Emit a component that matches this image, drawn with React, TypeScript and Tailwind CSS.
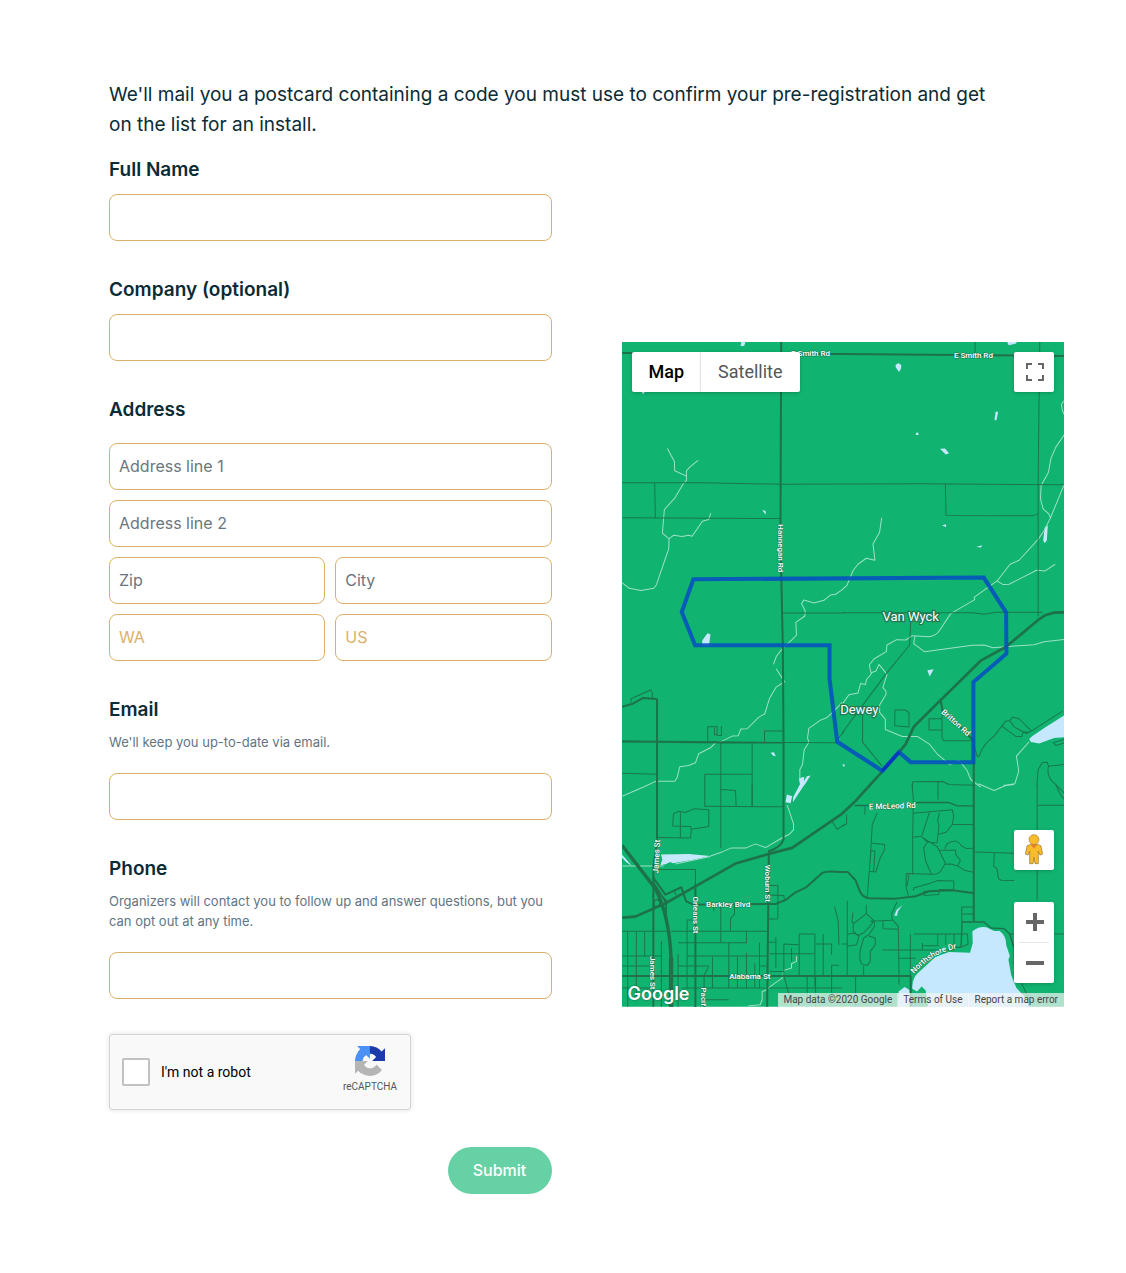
import React from "react";

const inputClass =
  "h-[47px] w-full min-w-0 rounded-lg border border-[#dbb06a] bg-white px-[9px] pb-[2px] text-base text-[#0b2b35] placeholder:text-[#6c757d] placeholder:opacity-100 focus:outline-none focus:ring-2 focus:ring-[#dbb06a]/40";
const labelClass = "block text-[19px] leading-[30px] font-semibold";

function Field({ id, label, type = "text", hint }: { id: string; label: string; type?: string; hint?: string }) {
  return (
    <div className="mb-[34px]">
      <label htmlFor={id} className={labelClass}>
        {label}
      </label>
      {hint && (
        <p id={id + "-hint"} className="mt-[7px] mb-[21px] text-[13px] leading-5 text-[#5f7583]">
          {hint}
        </p>
      )}
      <input
        id={id}
        type={type}
        aria-describedby={hint ? id + "-hint" : undefined}
        className={inputClass + (hint ? "" : " mt-[9px]")}
      />
    </div>
  );
}

function Recaptcha() {
  return (
    <div className="mt-[35px] flex h-[76px] w-[302px] items-center rounded-[3px] border border-[#d3d3d3] bg-[#f9f9f9] pl-3 shadow-[0_0_4px_1px_rgba(0,0,0,0.08)] font-[Roboto,sans-serif]">
      <input
        id="robot"
        type="checkbox"
        className="size-7 shrink-0 appearance-none rounded-[2px] border-2 border-[#c1c1c1] bg-white checked:bg-[#4285f4]"
      />
      <label htmlFor="robot" className="ml-[11px] flex-1 text-sm text-black">
        I'm not a robot
      </label>
      <div className="mr-[13px] flex flex-col items-center self-start pt-[11px]">
        <svg viewBox="0 0 64 64" className="size-[30px]" aria-hidden="true">
          <path fill="#1c3aa9" d="M64 31.955l-.033-1.37V4.687l-7.16 7.16C50.948 4.674 42.033.093 32.05.093c-10.4 0-19.622 4.96-25.458 12.64l11.736 11.86a15.55 15.55 0 0 1 4.754-5.334c2.05-1.6 4.952-2.906 8.968-2.906.485 0 .86.057 1.135.163 4.976.393 9.288 3.14 11.828 7.124l-8.307 8.307L64 31.953" />
          <path fill="#4a90f5" d="M31.862.094l-1.37.033H4.594l7.16 7.16C4.58 13.147 0 22.06 0 32.046c0 10.4 4.96 19.622 12.64 25.458L24.5 45.768a15.55 15.55 0 0 1-5.334-4.754c-1.6-2.05-2.906-4.952-2.906-8.968 0-.485.057-.86.163-1.135.393-4.976 3.14-9.288 7.124-11.828l8.307 8.307L31.86.095" />
          <path fill="#b5b5b5" d="M.001 32.045l.033 1.37v25.898l7.16-7.16c5.86 7.173 14.774 11.754 24.76 11.754 10.4 0 19.622-4.96 25.458-12.64l-11.736-11.86a15.55 15.55 0 0 1-4.754 5.334c-2.05 1.6-4.952 2.906-8.968 2.906-.485 0-.86-.057-1.135-.163-4.976-.393-9.288-3.14-11.828-7.124l8.307-8.307c-10.522.04-22.4.066-27.295-.005" />
        </svg>
        <span className="mt-[5px] text-[10px] leading-[12px] text-[#555]">reCAPTCHA</span>
      </div>
    </div>
  );
}

function RoadLabel({ x, y, children, rotate = 0, size = 24 }: { x: number; y: number; children: string; rotate?: number; size?: number }) {
  return (
    <text
      transform={`translate(${x} ${y}) rotate(${rotate})`}
      textAnchor="middle"
      dominantBaseline="central"
      fontSize={size}
      fontWeight={size > 30 ? 400 : 500}
      fill="#fff"
      stroke="#1f7a55"
      strokeWidth={size > 30 ? 8 : 3}
      paintOrder="stroke"
      strokeLinejoin="round"
    >
      {children}
    </text>
  );
}

function MapDrawing() {
  return (
    <svg
      viewBox="0 0 1326 1992"
      preserveAspectRatio="xMidYMid slice"
      className="block size-full font-[Roboto,sans-serif]"
      role="img"
      aria-label="Map of Van Wyck and Dewey"
    >
      <rect width="1326" height="1992" fill="#10b36f" />

      {/* lakes and ponds */}
      <g fill="#c5e8ff">
        <path d="M358 0H370L366 12L355 12ZM420 504L430 506L431 518ZM60 150h7v4h-7z" />
        <g transform="translate(660 0)">
          <path d="M494 0L524 0L519 5L499 10ZM160 68L169 63L177 70L176 80L170 90L160 76ZM460 208L467 210L462 235L456 233ZM222 272L227 271L229 279L220 279ZM293 320L308 319L320 333L310 337ZM299 550L311 546V554ZM401 614L419 609L416 616ZM607 555L616 550L613 595L607 603L602 595Z" />
        </g>
        <g transform="translate(0 666)">
          <path d="M256 207L265 210L261 244L239 243L241 228ZM445 565L455 563L461 575L453 574ZM530 642L546 637L544 662L534 664ZM565 633L548 660L540 666L536 666L554 635Z" />
        </g>
        <g transform="translate(660 666)">
          <path d="M255 318L274 315L262 336ZM0 600L8 600L5 608ZM666 452V518L635 521L590 537L565 533L560 524L570 515L610 488Z" />
        </g>
        <g transform="translate(0 1326)">
          <path d="M117 210L200 208L265 214L210 226L152 236L145 232L130 239L115 242L121 225ZM494 30L510 35L505 56L490 53ZM547 0L512 53L513 38L533 0ZM0 210L30 244L12 232L0 219Z" />
        </g>
        <g transform="translate(660 1326)">
          <path d="M180 362L167 380L164 393L156 393L163 376ZM390 440Q410 424 432 428L455 439L472 439Q492 455 491 480L502 513L498 525L506 570L522 610L553 642L560 672H258L250 617L238 605L224 620L210 612Q208 580 230 562L280 516L320 502L383 504L391 475ZM166 672L169 620L187 607L202 616L205 672Z" />
        </g>
      </g>

      {/* streams */}
      <g fill="none" stroke="#9de0c8" strokeWidth="3" strokeLinejoin="round">
        <path d="M136 319L157 358L158 386L193 402V415L184 424L158 468L127 502L121 573L141 590L140 620L124 666L103 728L95 738L57 745L22 738L0 721M228 355L203 375L193 386V402M141 590L155 579L180 583L200 579L210 582L241 537L260 532L266 513" />
        <g transform="translate(660 0)">
          <path d="M666 175Q654 185 658 195Q658 205 666 218M666 277L640 315L625 350L618 390L596 430L594 470L602 500L619 515L624 527M666 425L624 527L605 565L588 590L530 654L503 666L464 716L395 765L397 772L325 814L292 864Q280 882 260 883L210 880L190 893L163 892L134 908L132 928L95 950L81 968L87 995L72 1012L70 1026L55 1023L47 1052L20 1057L2 1083M118 527L112 570L92 605L98 654L72 648L47 666L33 684L14 729L0 742L-20 756L-35 758L-55 774L-85 782L-115 773L-122 784L-111 806L-112 821L-139 840L-137 878L-150 892" />
        </g>
        <g transform="translate(0 666)">
          <path d="M510 226L483 250L463 275L454 300M462 313L487 352L462 368L442 402L428 448L410 458L375 493L356 494L348 514L330 515L300 530L280 535L265 550L230 568L220 595L200 603L173 607L165 640L158 650H102L68 666L0 695M660 414L635 440L613 460L595 467L560 492L556 520L560 534L546 555L541 600L533 615V645" />
        </g>
        <g transform="translate(660 666)">
          <path d="M638 0L608 20L582 18L500 60L482 61L464 50M218 215L214 238L246 262L390 243L425 242L452 250L530 244L575 241L605 232L666 225M87 325L101 320L110 300L134 330L122 370L131 380V390L112 422V444L129 464V495L180 516H225L262 540L284 568L322 600L333 596L350 588L374 618L385 645L415 668M483 663L517 658L529 620L522 575L560 532M408 658L455 678L490 663L515 660" />
        </g>
        <g transform="translate(0 1326)">
          <path d="M0 244H125M265 214L300 202L328 190L372 190L400 178L430 189L483 158L500 150L514 136V118L495 62M160 238L265 216M523 515V530L508 537V550L485 557L480 580L458 595L430 617L420 620V645L414 660L378 664" />
        </g>
      </g>

      {/* minor roads */}
      <g fill="none" stroke="#1a774c" strokeWidth="3" strokeLinejoin="round">
        <path d="M0 422H240L475 426L896 425L1326 428M98 422L100 527M0 527L474 529" />
        <path d="M1058 0V36M1252 0L1250 150L1247 427L1247 822M969 427L971 520L1230 521L1247 515" />
        <g transform="translate(0 666)">
          <path d="M27 415V403L85 377L91 385V405M0 529L483 534L645 535M480 146H666M257 533V487L285 486V510L277 512V490M285 513H298V485M427 533V500H483M0 626L104 629M296 535V850M390 535V726M248 726V629H390M645 525L666 500" />
        </g>
        <g transform="translate(660 666)">
          <path d="M0 145H390L425 150L462 144H600M205 170L202 242L130 330L61 423L0 505M61 423V533L120 606M158 437H190L200 445V488L157 484ZM299 463H260V497H299M299 430V520L304 529H390M390 525L404 575Q410 580 412 570Q422 540 455 515L478 485L490 470L502 469L510 458L530 463L567 500L552 507L516 488L502 469M478 485L520 516L538 516L542 502L562 503L660 440M632 535L666 525M632 535L640 543L666 535M583 665L587 615L600 594L614 593L618 605L666 600M618 605Q610 640 640 660L666 686M211 668V652L300 651L320 660L395 662M287 651V705" />
        </g>
        <g transform="translate(0 1326)">
          <path d="M248 65L483 67M296 15L340 18L342 65M390 0V65M108 159L205 160L208 134L205 126L152 124L154 88L170 80L190 84L215 73L260 76V126L208 134M175 83V159M94 255H220V430M630 110L645 134L666 120M440 303H467V402L438 404M438 331L485 333L487 348M0 440H135M147 440H435M168 474H373V440M296 360V474M337 360V388L325 402V440M275 360V380M195 490V406H220M0 514H118M0 544H90M195 514H435M168 544H260M17 440V666M43 440V640M68 440V514M118 470V666M168 508V666M195 455V610M246 573V666M271 516V610M320 474V610M346 516V610M373 504V610M398 536V610M412 474V610M415 544H435M0 610H90M180 610H430M248 645H320M437 473H458M461 458V550M443 560H485M485 478L530 480M485 478V573M443 507H578M508 490V530M531 448H578V610M531 448V573M603 448V573M578 478H628V510M650 542H628V640M637 366L648 410L650 480M555 573V640M485 573L510 666M440 610H660M580 573V666M157 320L162 332M246 573L260 545" />
        </g>
        <g transform="translate(660 1326)">
          <path d="M68 66V90M105 85L90 120L84 220L75 338M90 176L127 180V195L113 222L101 262L81 260L86 198L98 200L94 262M13 90V118L0 125M209 0L213 45L211 158V270M211 86L330 76L334 95L330 120L311 143L287 150L284 175L255 172L239 158M261 84L238 155L211 158M291 84L286 110L290 125L287 150M330 120H394M239 158L284 186L290 197L309 236L295 260Q285 270 266 269L192 267L191 306L198 333M255 172L244 190L250 230L267 268M290 197H340V210L354 227L346 244L325 238L308 239M308 193Q310 170 340 169Q350 173 358 184L372 192L394 191M346 244L368 258L394 263M200 270L194 305M213 318L214 310L264 296L285 288L334 289V314L290 315L289 330L245 333V320L290 319M398 202L515 206M456 204L454 245L464 253L468 282L476 287L515 288M584 62H666M584 0V345M640 0Q650 28 666 45M15 348V572M32 384L29 412L35 416L72 387L95 408L83 425L63 445L50 451L33 446L17 449M72 387V360M33 414V440L50 455L43 480L17 484M95 408L97 425L80 450L64 460L53 500V526L60 540L75 542L84 530V500L99 480V461L80 454M64 545V573M164 352L148 388L150 405L168 425L170 572M83 410L150 407M122 409V432L168 434M358 413V367H392M358 388H392M204 448V575M120 496H335M170 521H220M215 448H375L377 478L360 486M240 475V496M240 483H290M286 448V480M310 448V480M335 448V485M0 478H15M170 573V600M40 573V666M502 448H666M502 448L515 490V540M535 590L560 645" />
        </g>
      </g>

      {/* arterials */}
      <g fill="none" stroke="#1d724b" strokeLinejoin="round">
        <g strokeWidth="6">
          <path d="M0 33L660 36L1326 42M477 0L475 545L477 691L482 910L484 1196V1491Q475 1515 440 1526L435 1992" />
          <path d="M105 1070V1500L94 1570V1992M1054 1190V1735M0 1900H865V1992" />
          <path d="M0 1093L30 1085L62 1067L105 1070" />
          <path d="M0 1198L320 1201H483" strokeWidth="5" />
          <path d="M954 1071L960 1101L980 1121L1050 1191" />
          <g transform="translate(0 1326)">
            <path d="M220 300V670M94 280L130 330L178 308L192 350L215 360L460 358L490 346L520 323L552 308L600 265Q615 258 650 262L676 262L700 287L712 318Q720 338 740 341L820 342L880 335L920 320L990 317L1052 325" />
            <path d="M698 63H740M870 60L885 54L980 54L1005 64H1054M1054 412H1085L1106 430L1145 432L1162 448L1175 490M1054 412H1019L1016 488L990 488" strokeWidth="4" />
            <path d="M96 350Q105 340 112 350T102 367Q94 365 96 352M120 335L135 350" strokeWidth="4" />
          </g>
        </g>
        <path
          d="M1326 810L1295 811L1270 818L1247 833L1150 914L1075 955L945 1083L875 1152L850 1205L828 1232L781 1286L700 1375L660 1413L510 1516L440 1534L340 1563L130 1682L40 1722L0 1725"
          strokeWidth="8"
        />
        <path d="M0 1508L100 1638Q142 1720 147 1846V1992" strokeWidth="10" />
        <path d="M147 1845V1992" strokeWidth="13" />
        <path d="M95 1620L132 1680V1740" strokeWidth="5" />
      </g>

      {/* service area boundary */}
      <path
        d="M214 711L1084 706L1151 810L1152 934L1053 1019V1259L865 1259L830 1229L780 1285L645 1198L622 1010V909H219L179 809Z"
        fill="none"
        stroke="#0550c0"
        strokeOpacity="0.88"
        strokeWidth="12"
      />
      <path d="M830 1229L780 1285" stroke="#0824c8" strokeOpacity="0.6" strokeWidth="10" />

      <RoadLabel x={565} y={35}>E Smith Rd</RoadLabel>
      <RoadLabel x={1053} y={39}>E Smith Rd</RoadLabel>
      <RoadLabel x={476} y={618} rotate={90}>Hannegan Rd</RoadLabel>
      <RoadLabel x={865} y={823} size={39}>Van Wyck</RoadLabel>
      <RoadLabel x={711} y={1102} size={39}>Dewey</RoadLabel>
      <RoadLabel x={1000} y={1141} rotate={42}>Britton Rd</RoadLabel>
      <RoadLabel x={810} y={1391} rotate={-2}>E McLeod Rd</RoadLabel>
      <RoadLabel x={104} y={1542} rotate={-87}>James St</RoadLabel>
      <RoadLabel x={437} y={1622} rotate={90}>Woburn St</RoadLabel>
      <RoadLabel x={221} y={1717} rotate={90}>Orleans St</RoadLabel>
      <RoadLabel x={318} y={1685}>Barkley Blvd</RoadLabel>
      <RoadLabel x={92} y={1890} rotate={90}>James St</RoadLabel>
      <RoadLabel x={383} y={1901}>Alabama St</RoadLabel>
      <RoadLabel x={245} y={1962} rotate={90}>Pacif</RoadLabel>
      <g transform="translate(660 1326)" fontSize="24" fontWeight="500" fill="#fff" stroke="#1f7a55" strokeWidth="3" paintOrder="stroke">
        <path id="northshore" d="M215 568Q275 498 360 489" fill="none" stroke="none" />
        <text>
          <textPath href="#northshore">Northshore Dr</textPath>
        </text>
      </g>
    </svg>
  );
}

function Pegman() {
  return (
    <svg viewBox="0 0 54 94" className="h-[31px] w-[18px]" aria-hidden="true">
      <path d="M17 31L6 36L1 61L9 64L14 52V90H24L27 70L30 90H40V52L45 64L53 61L48 36L37 31Z" fill="#fbbc2c" stroke="#8c6d32" strokeWidth="2" />
      <path d="M16 31H38L27 45Z" fill="#e5822b" />
      <circle cx="27" cy="17" r="15" fill="#fbbc2c" stroke="#a87a2c" strokeWidth="2" />
    </svg>
  );
}

const controlClass = "flex items-center justify-center bg-white";
const shadowClass = "rounded-[2px] bg-white shadow-[0_1px_4px_-1px_rgba(0,0,0,0.3)]";

function MapPanel() {
  return (
    <section aria-label="Map" className="relative aspect-[442/664] w-full overflow-hidden font-[Roboto,sans-serif]">
      <MapDrawing />
      <div className={"absolute top-[10px] left-[10px] flex h-10 text-lg " + shadowClass}>
        <button type="button" className="rounded-l-[2px] px-[17px] font-medium text-black">
          Map
        </button>
        <button type="button" className="rounded-r-[2px] px-[17px] text-[#565656] shadow-[-1px_0_1px_rgba(0,0,0,0.12)]">
          Satellite
        </button>
      </div>
      <button type="button" aria-label="Toggle fullscreen view" className={"absolute top-[10px] right-[10px] size-10 " + controlClass + " " + shadowClass}>
        <svg viewBox="0 0 18 18" className="ml-[2px] size-[18px]" fill="none" stroke="#666" strokeWidth="2" aria-hidden="true">
          <path d="M1 6V1H6M12 1H17V6M17 12V17H12M6 17H1V12" />
        </svg>
      </button>
      <div className="absolute right-[10px] bottom-6 flex flex-col gap-8">
        <button type="button" aria-label="Street View" className={"size-10 " + controlClass + " " + shadowClass}>
          <Pegman />
        </button>
        <div className={"flex w-10 flex-col " + shadowClass}>
          <button type="button" aria-label="Zoom in" className="flex h-10 items-center justify-center pl-[2px]">
            <svg viewBox="0 0 18 18" className="size-[18px]" fill="#666" aria-hidden="true">
              <path d="M7 0h4v7h7v4h-7v7H7v-7H0V7h7z" />
            </svg>
          </button>
          <span className="mx-[5px] h-px bg-[#e6e6e6]" />
          <button type="button" aria-label="Zoom out" className="flex h-10 items-center justify-center pl-[2px]">
            <svg viewBox="0 0 18 18" className="size-[18px]" fill="#666" aria-hidden="true">
              <path d="M0 7h18v4H0z" />
            </svg>
          </button>
        </div>
      </div>
      <span className="absolute bottom-0 left-[6px] text-[18px] leading-[27px] font-semibold text-white font-[Inter,sans-serif] [text-shadow:0_0_2px_#145b3c]">
        Google
      </span>
      <div className="absolute right-0 bottom-0 flex h-[14px] items-center bg-[#f5f5f5]/70 text-[10px] leading-[14px] text-[#444]">
        <span className="px-[5px]">Map data ©2020 Google</span>
        <a href="#terms" className="border-l border-white/40 px-[5px]">Terms of Use</a>
        <a href="#report" className="border-l border-white/40 px-[6px]">Report a map error</a>
      </div>
    </section>
  );
}

export default function App() {
  return (
    <main className="min-h-screen bg-white pt-20 pr-[62px] pb-[79px] pl-[109px] text-[#0b2b35] font-[Inter,sans-serif]">
      <p className="max-w-[900px] text-[19px] leading-[30px]">
        We'll mail you a postcard containing a code you must use to confirm your pre-registration and get on the list for an install.
      </p>
      <div className="mt-[15px] grid grid-cols-2 items-center gap-[70px]">
        <form onSubmit={(e) => e.preventDefault()}>
          <Field id="name" label="Full Name" />
          <Field id="company" label="Company (optional)" />
          <fieldset className="mb-[34px]">
            <legend className={labelClass}>Address</legend>
            <div className="mt-[18px] grid grid-cols-2 gap-[10px]">
              <input aria-label="Address line 1" placeholder="Address line 1" className={inputClass + " col-span-2"} />
              <input aria-label="Address line 2" placeholder="Address line 2" className={inputClass + " col-span-2"} />
              <input aria-label="Zip" placeholder="Zip" className={inputClass} />
              <input aria-label="City" placeholder="City" className={inputClass} />
              <input aria-label="State" placeholder="WA" className={inputClass + " placeholder:text-[#dbb06a]!"} />
              <input aria-label="Country" placeholder="US" className={inputClass + " placeholder:text-[#dbb06a]!"} />
            </div>
          </fieldset>
          <Field id="email" type="email" label="Email" hint="We'll keep you up-to-date via email." />
          <Field
            id="phone"
            type="tel"
            label="Phone"
            hint="Organizers will contact you to follow up and answer questions, but you can opt out at any time."
          />
          <Recaptcha />
          <div className="mt-[37px] flex justify-end">
            <button type="submit" className="h-[47px] w-[104px] rounded-full bg-[#66d1a5] pb-[2px] text-base font-medium text-white">
              Submit
            </button>
          </div>
        </form>
        <MapPanel />
      </div>
    </main>
  );
}
